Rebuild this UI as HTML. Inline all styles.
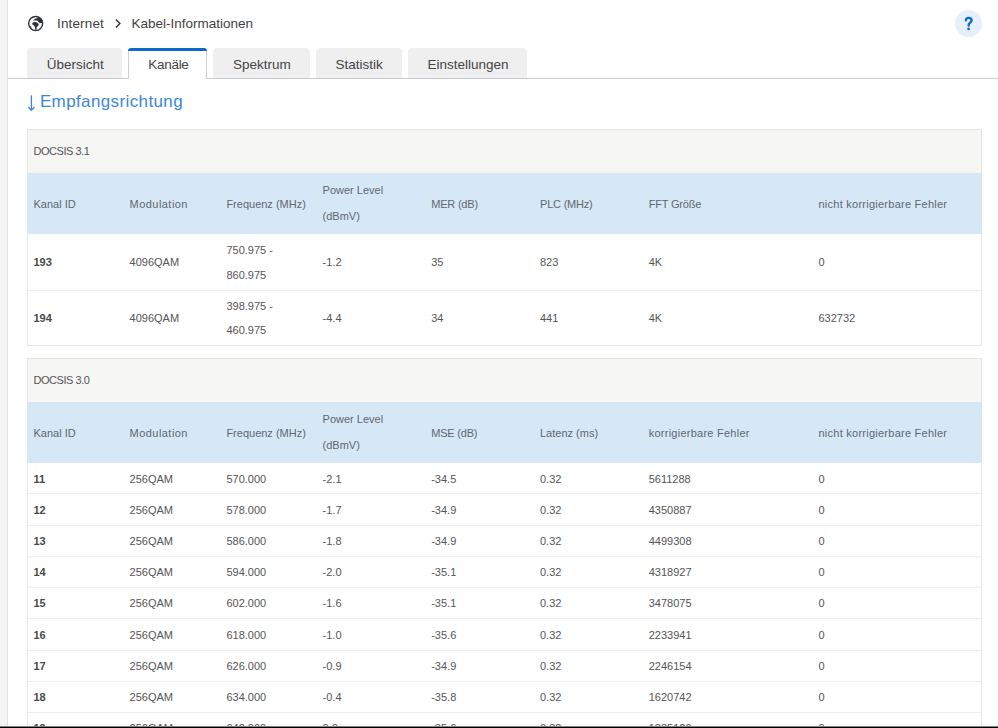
<!DOCTYPE html>
<html><head><meta charset="utf-8"><style>
html,body{margin:0;padding:0;}
body{width:998px;height:728px;overflow:hidden;position:relative;background:#fff;font-family:"Liberation Sans", sans-serif;}
.t{position:absolute;white-space:nowrap;}
.b{position:absolute;}
</style></head><body>
<div class="b" style="left:0px;top:0px;width:7px;height:728px;background:#f5f5f5"></div>
<div class="b" style="left:7px;top:0px;width:1px;height:728px;background:#e2e2e2"></div>
<svg class="b" style="left:25px;top:13px" width="22" height="22" viewBox="0 0 22 22">
<circle cx="10.65" cy="10.5" r="7.0" fill="none" stroke="#2c333a" stroke-width="1.45"/>
<path d="M8.0 7.4 L10.0 5.7 L13.6 4.8 L16.0 5.1 L17.5 6.9 L18.1 9.7 L14.8 10.3 L13.3 8.8 L12.1 7.6 L10.0 7.4 Z" fill="#2c333a"/>
<path d="M7.25 10.0 L9.06 9.06 L11.5 9.37 L13.3 10.6 L13.9 12.1 L12.7 13.0 L11.8 14.2 L11.3 16.8 L10.3 16.8 L10.0 14.2 L9.06 12.4 L7.55 11.8 Z" fill="#2c333a"/>
<path d="M4.6 12.8 L6.4 13.8 L6.3 15.3 L5.4 15.4 Z" fill="#2c333a"/>
</svg>
<div class="t" style="left:57px;top:14.06px;font-size:13.5px;line-height:20px;color:#3f3f3f;font-weight:normal;letter-spacing:0.15px;">Internet</div>
<svg class="b" style="left:108px;top:14px" width="20" height="20" viewBox="108 14 20 20"><path d="M115.9 19.5 L119.9 23.45 L115.9 27.4" fill="none" stroke="#30363c" stroke-width="1.45"/></svg>
<div class="t" style="left:131.5px;top:14.06px;font-size:13.5px;line-height:20px;color:#3f3f3f;font-weight:normal;letter-spacing:0px;">Kabel-Informationen</div>
<div class="b" style="left:955px;top:10px;width:27px;height:27px;background:#e6effa;border-radius:50%"></div>
<svg class="b" style="left:945px;top:0px" width="53" height="50" viewBox="945 0 53 50"><path d="M965.9 20.3 C966.1 18.7 967.3 17.9 968.65 17.9 C970.4 17.9 971.6 19 971.6 20.5 C971.6 22.4 968.9 22.9 968.7 24.7 L968.7 25.6" stroke="#0d6bd2" stroke-width="2.35" fill="none" stroke-linecap="round"/><circle cx="968.6" cy="28.9" r="1.4" fill="#0d6bd2"/></svg>
<div class="b" style="left:8px;top:78px;width:990px;height:1px;background:#cacbce"></div>
<div class="b" style="left:27px;top:48px;width:95px;height:30px;background:#efefef;border-radius:4px 4px 0 0"></div>
<div class="t" style="left:46.7px;top:54.66px;font-size:13.5px;line-height:20px;color:#444;font-weight:normal;letter-spacing:0px;">Übersicht</div>
<div class="b" style="left:128px;top:51px;width:79px;height:28px;background:#fff;border:1px solid #cfcfcf;border-bottom:none;border-top:none;box-sizing:border-box"></div>
<div class="b" style="left:128px;top:48px;width:79px;height:3px;background:#0b69cc;border-radius:3px 3px 0 0"></div>
<div class="t" style="left:148.3px;top:54.66px;font-size:13.5px;line-height:20px;color:#444;font-weight:normal;letter-spacing:-0.3px;">Kanäle</div>
<div class="b" style="left:213px;top:48px;width:97px;height:30px;background:#efefef;border-radius:4px 4px 0 0"></div>
<div class="t" style="left:233px;top:54.66px;font-size:13.5px;line-height:20px;color:#444;font-weight:normal;letter-spacing:0px;">Spektrum</div>
<div class="b" style="left:316px;top:48px;width:86px;height:30px;background:#efefef;border-radius:4px 4px 0 0"></div>
<div class="t" style="left:335.6px;top:54.66px;font-size:13.5px;line-height:20px;color:#444;font-weight:normal;letter-spacing:0px;">Statistik</div>
<div class="b" style="left:408px;top:48px;width:119px;height:30px;background:#efefef;border-radius:4px 4px 0 0"></div>
<div class="t" style="left:427.5px;top:54.66px;font-size:13.5px;line-height:20px;color:#444;font-weight:normal;letter-spacing:0px;">Einstellungen</div>
<svg class="b" style="left:22px;top:90px" width="24" height="24" viewBox="22 90 24 24"><path d="M31.4 95.3 L31.4 110" stroke="#3d87d8" stroke-width="1.3" fill="none"/><path d="M28.3 107 L31.4 110.2 L34.4 107" stroke="#3d87d8" stroke-width="1.3" fill="none" stroke-linejoin="round"/></svg>
<div class="t" style="left:39.9px;top:89.50px;font-size:17px;line-height:24px;color:#3d87d8;font-weight:normal;letter-spacing:0.38px;">Empfangsrichtung</div>
<div class="b" style="left:27px;top:129px;width:955px;height:217px;border:1px solid #e6e6e6;box-sizing:border-box;background:#fff"></div>
<div class="b" style="left:28px;top:130px;width:953px;height:43px;background:#f6f6f4"></div>
<div class="b" style="left:27px;top:173px;width:955px;height:61px;background:#d6e7f6"></div>
<div class="t" style="left:33.5px;top:141.33px;font-size:11px;line-height:20px;color:#555;font-weight:normal;letter-spacing:-0.45px;">DOCSIS 3.1</div>
<div class="t" style="left:33.5px;top:193.93px;font-size:11px;line-height:20px;color:#5f6870;font-weight:normal;letter-spacing:0px;">Kanal ID</div>
<div class="t" style="left:129.6px;top:193.93px;font-size:11px;line-height:20px;color:#5f6870;font-weight:normal;letter-spacing:0.45px;">Modulation</div>
<div class="t" style="left:226.4px;top:193.93px;font-size:11px;line-height:20px;color:#5f6870;font-weight:normal;letter-spacing:0px;">Frequenz (MHz)</div>
<div class="t" style="left:322.6px;top:180.13px;font-size:11px;line-height:20px;color:#5f6870;font-weight:normal;letter-spacing:0px;">Power Level</div>
<div class="t" style="left:322.6px;top:206.43px;font-size:11px;line-height:20px;color:#5f6870;font-weight:normal;letter-spacing:0px;">(dBmV)</div>
<div class="t" style="left:431.2px;top:193.93px;font-size:11px;line-height:20px;color:#5f6870;font-weight:normal;letter-spacing:-0.2px;">MER (dB)</div>
<div class="t" style="left:540px;top:193.93px;font-size:11px;line-height:20px;color:#5f6870;font-weight:normal;letter-spacing:-0.2px;">PLC (MHz)</div>
<div class="t" style="left:648.7px;top:193.93px;font-size:11px;line-height:20px;color:#5f6870;font-weight:normal;letter-spacing:-0.2px;">FFT Größe</div>
<div class="t" style="left:818.5px;top:193.93px;font-size:11px;line-height:20px;color:#5f6870;font-weight:normal;letter-spacing:0.25px;">nicht korrigierbare Fehler</div>
<div class="b" style="left:28px;top:290px;width:953px;height:1px;background:#ededed"></div>
<div class="t" style="left:33.5px;top:252.33px;font-size:11px;line-height:20px;color:#4a4a4a;font-weight:bold;letter-spacing:0px;">193</div>
<div class="t" style="left:129.6px;top:252.33px;font-size:11px;line-height:20px;color:#555;font-weight:normal;letter-spacing:0px;">4096QAM</div>
<div class="t" style="left:226.4px;top:240.33px;font-size:11px;line-height:20px;color:#555;font-weight:normal;letter-spacing:0px;">750.975 -</div>
<div class="t" style="left:226.4px;top:264.53px;font-size:11px;line-height:20px;color:#555;font-weight:normal;letter-spacing:0px;">860.975</div>
<div class="t" style="left:322.6px;top:252.33px;font-size:11px;line-height:20px;color:#555;font-weight:normal;letter-spacing:0px;">-1.2</div>
<div class="t" style="left:431.2px;top:252.33px;font-size:11px;line-height:20px;color:#555;font-weight:normal;letter-spacing:0px;">35</div>
<div class="t" style="left:540px;top:252.33px;font-size:11px;line-height:20px;color:#555;font-weight:normal;letter-spacing:0px;">823</div>
<div class="t" style="left:648.7px;top:252.33px;font-size:11px;line-height:20px;color:#555;font-weight:normal;letter-spacing:0px;">4K</div>
<div class="t" style="left:818.5px;top:252.33px;font-size:11px;line-height:20px;color:#555;font-weight:normal;letter-spacing:0px;">0</div>
<div class="t" style="left:33.5px;top:307.93px;font-size:11px;line-height:20px;color:#4a4a4a;font-weight:bold;letter-spacing:0px;">194</div>
<div class="t" style="left:129.6px;top:307.93px;font-size:11px;line-height:20px;color:#555;font-weight:normal;letter-spacing:0px;">4096QAM</div>
<div class="t" style="left:226.4px;top:295.93px;font-size:11px;line-height:20px;color:#555;font-weight:normal;letter-spacing:0px;">398.975 -</div>
<div class="t" style="left:226.4px;top:320.13px;font-size:11px;line-height:20px;color:#555;font-weight:normal;letter-spacing:0px;">460.975</div>
<div class="t" style="left:322.6px;top:307.93px;font-size:11px;line-height:20px;color:#555;font-weight:normal;letter-spacing:0px;">-4.4</div>
<div class="t" style="left:431.2px;top:307.93px;font-size:11px;line-height:20px;color:#555;font-weight:normal;letter-spacing:0px;">34</div>
<div class="t" style="left:540px;top:307.93px;font-size:11px;line-height:20px;color:#555;font-weight:normal;letter-spacing:0px;">441</div>
<div class="t" style="left:648.7px;top:307.93px;font-size:11px;line-height:20px;color:#555;font-weight:normal;letter-spacing:0px;">4K</div>
<div class="t" style="left:818.5px;top:307.93px;font-size:11px;line-height:20px;color:#555;font-weight:normal;letter-spacing:0px;">632732</div>
<div class="b" style="left:27px;top:358px;width:955px;height:400px;border:1px solid #e6e6e6;box-sizing:border-box;background:#fff"></div>
<div class="b" style="left:28px;top:359px;width:953px;height:43px;background:#f6f6f4"></div>
<div class="b" style="left:27px;top:402px;width:955px;height:61px;background:#d6e7f6"></div>
<div class="t" style="left:33.5px;top:369.73px;font-size:11px;line-height:20px;color:#555;font-weight:normal;letter-spacing:-0.45px;">DOCSIS 3.0</div>
<div class="t" style="left:33.5px;top:422.73px;font-size:11px;line-height:20px;color:#5f6870;font-weight:normal;letter-spacing:0px;">Kanal ID</div>
<div class="t" style="left:129.6px;top:422.73px;font-size:11px;line-height:20px;color:#5f6870;font-weight:normal;letter-spacing:0.45px;">Modulation</div>
<div class="t" style="left:226.4px;top:422.73px;font-size:11px;line-height:20px;color:#5f6870;font-weight:normal;letter-spacing:0px;">Frequenz (MHz)</div>
<div class="t" style="left:322.6px;top:409.13px;font-size:11px;line-height:20px;color:#5f6870;font-weight:normal;letter-spacing:0px;">Power Level</div>
<div class="t" style="left:322.6px;top:435.43px;font-size:11px;line-height:20px;color:#5f6870;font-weight:normal;letter-spacing:0px;">(dBmV)</div>
<div class="t" style="left:431.2px;top:422.73px;font-size:11px;line-height:20px;color:#5f6870;font-weight:normal;letter-spacing:-0.2px;">MSE (dB)</div>
<div class="t" style="left:540px;top:422.73px;font-size:11px;line-height:20px;color:#5f6870;font-weight:normal;letter-spacing:0px;">Latenz (ms)</div>
<div class="t" style="left:648.7px;top:422.73px;font-size:11px;line-height:20px;color:#5f6870;font-weight:normal;letter-spacing:0.25px;">korrigierbare Fehler</div>
<div class="t" style="left:818.5px;top:422.73px;font-size:11px;line-height:20px;color:#5f6870;font-weight:normal;letter-spacing:0.25px;">nicht korrigierbare Fehler</div>
<div class="t" style="left:33.5px;top:468.73px;font-size:11px;line-height:20px;color:#4a4a4a;font-weight:bold;letter-spacing:0px;">11</div>
<div class="t" style="left:129.6px;top:468.73px;font-size:11px;line-height:20px;color:#555;font-weight:normal;letter-spacing:0px;">256QAM</div>
<div class="t" style="left:226.4px;top:468.73px;font-size:11px;line-height:20px;color:#555;font-weight:normal;letter-spacing:0px;">570.000</div>
<div class="t" style="left:322.6px;top:468.73px;font-size:11px;line-height:20px;color:#555;font-weight:normal;letter-spacing:0px;">-2.1</div>
<div class="t" style="left:431.2px;top:468.73px;font-size:11px;line-height:20px;color:#555;font-weight:normal;letter-spacing:0px;">-34.5</div>
<div class="t" style="left:540px;top:468.73px;font-size:11px;line-height:20px;color:#555;font-weight:normal;letter-spacing:0px;">0.32</div>
<div class="t" style="left:648.7px;top:468.73px;font-size:11px;line-height:20px;color:#555;font-weight:normal;letter-spacing:0px;">5611288</div>
<div class="t" style="left:818.5px;top:468.73px;font-size:11px;line-height:20px;color:#555;font-weight:normal;letter-spacing:0px;">0</div>
<div class="b" style="left:28px;top:493px;width:953px;height:1px;background:#ededed"></div>
<div class="t" style="left:33.5px;top:499.90px;font-size:11px;line-height:20px;color:#4a4a4a;font-weight:bold;letter-spacing:0px;">12</div>
<div class="t" style="left:129.6px;top:499.90px;font-size:11px;line-height:20px;color:#555;font-weight:normal;letter-spacing:0px;">256QAM</div>
<div class="t" style="left:226.4px;top:499.90px;font-size:11px;line-height:20px;color:#555;font-weight:normal;letter-spacing:0px;">578.000</div>
<div class="t" style="left:322.6px;top:499.90px;font-size:11px;line-height:20px;color:#555;font-weight:normal;letter-spacing:0px;">-1.7</div>
<div class="t" style="left:431.2px;top:499.90px;font-size:11px;line-height:20px;color:#555;font-weight:normal;letter-spacing:0px;">-34.9</div>
<div class="t" style="left:540px;top:499.90px;font-size:11px;line-height:20px;color:#555;font-weight:normal;letter-spacing:0px;">0.32</div>
<div class="t" style="left:648.7px;top:499.90px;font-size:11px;line-height:20px;color:#555;font-weight:normal;letter-spacing:0px;">4350887</div>
<div class="t" style="left:818.5px;top:499.90px;font-size:11px;line-height:20px;color:#555;font-weight:normal;letter-spacing:0px;">0</div>
<div class="b" style="left:28px;top:525px;width:953px;height:1px;background:#ededed"></div>
<div class="t" style="left:33.5px;top:531.07px;font-size:11px;line-height:20px;color:#4a4a4a;font-weight:bold;letter-spacing:0px;">13</div>
<div class="t" style="left:129.6px;top:531.07px;font-size:11px;line-height:20px;color:#555;font-weight:normal;letter-spacing:0px;">256QAM</div>
<div class="t" style="left:226.4px;top:531.07px;font-size:11px;line-height:20px;color:#555;font-weight:normal;letter-spacing:0px;">586.000</div>
<div class="t" style="left:322.6px;top:531.07px;font-size:11px;line-height:20px;color:#555;font-weight:normal;letter-spacing:0px;">-1.8</div>
<div class="t" style="left:431.2px;top:531.07px;font-size:11px;line-height:20px;color:#555;font-weight:normal;letter-spacing:0px;">-34.9</div>
<div class="t" style="left:540px;top:531.07px;font-size:11px;line-height:20px;color:#555;font-weight:normal;letter-spacing:0px;">0.32</div>
<div class="t" style="left:648.7px;top:531.07px;font-size:11px;line-height:20px;color:#555;font-weight:normal;letter-spacing:0px;">4499308</div>
<div class="t" style="left:818.5px;top:531.07px;font-size:11px;line-height:20px;color:#555;font-weight:normal;letter-spacing:0px;">0</div>
<div class="b" style="left:28px;top:556px;width:953px;height:1px;background:#ededed"></div>
<div class="t" style="left:33.5px;top:562.24px;font-size:11px;line-height:20px;color:#4a4a4a;font-weight:bold;letter-spacing:0px;">14</div>
<div class="t" style="left:129.6px;top:562.24px;font-size:11px;line-height:20px;color:#555;font-weight:normal;letter-spacing:0px;">256QAM</div>
<div class="t" style="left:226.4px;top:562.24px;font-size:11px;line-height:20px;color:#555;font-weight:normal;letter-spacing:0px;">594.000</div>
<div class="t" style="left:322.6px;top:562.24px;font-size:11px;line-height:20px;color:#555;font-weight:normal;letter-spacing:0px;">-2.0</div>
<div class="t" style="left:431.2px;top:562.24px;font-size:11px;line-height:20px;color:#555;font-weight:normal;letter-spacing:0px;">-35.1</div>
<div class="t" style="left:540px;top:562.24px;font-size:11px;line-height:20px;color:#555;font-weight:normal;letter-spacing:0px;">0.32</div>
<div class="t" style="left:648.7px;top:562.24px;font-size:11px;line-height:20px;color:#555;font-weight:normal;letter-spacing:0px;">4318927</div>
<div class="t" style="left:818.5px;top:562.24px;font-size:11px;line-height:20px;color:#555;font-weight:normal;letter-spacing:0px;">0</div>
<div class="b" style="left:28px;top:587px;width:953px;height:1px;background:#ededed"></div>
<div class="t" style="left:33.5px;top:593.41px;font-size:11px;line-height:20px;color:#4a4a4a;font-weight:bold;letter-spacing:0px;">15</div>
<div class="t" style="left:129.6px;top:593.41px;font-size:11px;line-height:20px;color:#555;font-weight:normal;letter-spacing:0px;">256QAM</div>
<div class="t" style="left:226.4px;top:593.41px;font-size:11px;line-height:20px;color:#555;font-weight:normal;letter-spacing:0px;">602.000</div>
<div class="t" style="left:322.6px;top:593.41px;font-size:11px;line-height:20px;color:#555;font-weight:normal;letter-spacing:0px;">-1.6</div>
<div class="t" style="left:431.2px;top:593.41px;font-size:11px;line-height:20px;color:#555;font-weight:normal;letter-spacing:0px;">-35.1</div>
<div class="t" style="left:540px;top:593.41px;font-size:11px;line-height:20px;color:#555;font-weight:normal;letter-spacing:0px;">0.32</div>
<div class="t" style="left:648.7px;top:593.41px;font-size:11px;line-height:20px;color:#555;font-weight:normal;letter-spacing:0px;">3478075</div>
<div class="t" style="left:818.5px;top:593.41px;font-size:11px;line-height:20px;color:#555;font-weight:normal;letter-spacing:0px;">0</div>
<div class="b" style="left:28px;top:618px;width:953px;height:1px;background:#ededed"></div>
<div class="t" style="left:33.5px;top:624.58px;font-size:11px;line-height:20px;color:#4a4a4a;font-weight:bold;letter-spacing:0px;">16</div>
<div class="t" style="left:129.6px;top:624.58px;font-size:11px;line-height:20px;color:#555;font-weight:normal;letter-spacing:0px;">256QAM</div>
<div class="t" style="left:226.4px;top:624.58px;font-size:11px;line-height:20px;color:#555;font-weight:normal;letter-spacing:0px;">618.000</div>
<div class="t" style="left:322.6px;top:624.58px;font-size:11px;line-height:20px;color:#555;font-weight:normal;letter-spacing:0px;">-1.0</div>
<div class="t" style="left:431.2px;top:624.58px;font-size:11px;line-height:20px;color:#555;font-weight:normal;letter-spacing:0px;">-35.6</div>
<div class="t" style="left:540px;top:624.58px;font-size:11px;line-height:20px;color:#555;font-weight:normal;letter-spacing:0px;">0.32</div>
<div class="t" style="left:648.7px;top:624.58px;font-size:11px;line-height:20px;color:#555;font-weight:normal;letter-spacing:0px;">2233941</div>
<div class="t" style="left:818.5px;top:624.58px;font-size:11px;line-height:20px;color:#555;font-weight:normal;letter-spacing:0px;">0</div>
<div class="b" style="left:28px;top:650px;width:953px;height:1px;background:#ededed"></div>
<div class="t" style="left:33.5px;top:655.75px;font-size:11px;line-height:20px;color:#4a4a4a;font-weight:bold;letter-spacing:0px;">17</div>
<div class="t" style="left:129.6px;top:655.75px;font-size:11px;line-height:20px;color:#555;font-weight:normal;letter-spacing:0px;">256QAM</div>
<div class="t" style="left:226.4px;top:655.75px;font-size:11px;line-height:20px;color:#555;font-weight:normal;letter-spacing:0px;">626.000</div>
<div class="t" style="left:322.6px;top:655.75px;font-size:11px;line-height:20px;color:#555;font-weight:normal;letter-spacing:0px;">-0.9</div>
<div class="t" style="left:431.2px;top:655.75px;font-size:11px;line-height:20px;color:#555;font-weight:normal;letter-spacing:0px;">-34.9</div>
<div class="t" style="left:540px;top:655.75px;font-size:11px;line-height:20px;color:#555;font-weight:normal;letter-spacing:0px;">0.32</div>
<div class="t" style="left:648.7px;top:655.75px;font-size:11px;line-height:20px;color:#555;font-weight:normal;letter-spacing:0px;">2246154</div>
<div class="t" style="left:818.5px;top:655.75px;font-size:11px;line-height:20px;color:#555;font-weight:normal;letter-spacing:0px;">0</div>
<div class="b" style="left:28px;top:681px;width:953px;height:1px;background:#ededed"></div>
<div class="t" style="left:33.5px;top:686.92px;font-size:11px;line-height:20px;color:#4a4a4a;font-weight:bold;letter-spacing:0px;">18</div>
<div class="t" style="left:129.6px;top:686.92px;font-size:11px;line-height:20px;color:#555;font-weight:normal;letter-spacing:0px;">256QAM</div>
<div class="t" style="left:226.4px;top:686.92px;font-size:11px;line-height:20px;color:#555;font-weight:normal;letter-spacing:0px;">634.000</div>
<div class="t" style="left:322.6px;top:686.92px;font-size:11px;line-height:20px;color:#555;font-weight:normal;letter-spacing:0px;">-0.4</div>
<div class="t" style="left:431.2px;top:686.92px;font-size:11px;line-height:20px;color:#555;font-weight:normal;letter-spacing:0px;">-35.8</div>
<div class="t" style="left:540px;top:686.92px;font-size:11px;line-height:20px;color:#555;font-weight:normal;letter-spacing:0px;">0.32</div>
<div class="t" style="left:648.7px;top:686.92px;font-size:11px;line-height:20px;color:#555;font-weight:normal;letter-spacing:0px;">1620742</div>
<div class="t" style="left:818.5px;top:686.92px;font-size:11px;line-height:20px;color:#555;font-weight:normal;letter-spacing:0px;">0</div>
<div class="b" style="left:28px;top:712px;width:953px;height:1px;background:#ededed"></div>
<div class="t" style="left:33.5px;top:718.09px;font-size:11px;line-height:20px;color:#4a4a4a;font-weight:bold;letter-spacing:0px;">19</div>
<div class="t" style="left:129.6px;top:718.09px;font-size:11px;line-height:20px;color:#555;font-weight:normal;letter-spacing:0px;">256QAM</div>
<div class="t" style="left:226.4px;top:718.09px;font-size:11px;line-height:20px;color:#555;font-weight:normal;letter-spacing:0px;">642.000</div>
<div class="t" style="left:322.6px;top:718.09px;font-size:11px;line-height:20px;color:#555;font-weight:normal;letter-spacing:0px;">0.0</div>
<div class="t" style="left:431.2px;top:718.09px;font-size:11px;line-height:20px;color:#555;font-weight:normal;letter-spacing:0px;">-35.6</div>
<div class="t" style="left:540px;top:718.09px;font-size:11px;line-height:20px;color:#555;font-weight:normal;letter-spacing:0px;">0.32</div>
<div class="t" style="left:648.7px;top:718.09px;font-size:11px;line-height:20px;color:#555;font-weight:normal;letter-spacing:0px;">1335120</div>
<div class="t" style="left:818.5px;top:718.09px;font-size:11px;line-height:20px;color:#555;font-weight:normal;letter-spacing:0px;">0</div>
<div class="b" style="left:28px;top:744px;width:953px;height:1px;background:#ededed"></div>
<div class="b" style="left:0px;top:724px;width:998px;height:1px;background:rgba(0,0,0,0.03)"></div>
<div class="b" style="left:0px;top:726px;width:998px;height:1px;background:#808080"></div>
<div class="b" style="left:0px;top:727px;width:998px;height:1px;background:#000"></div>
</body></html>
